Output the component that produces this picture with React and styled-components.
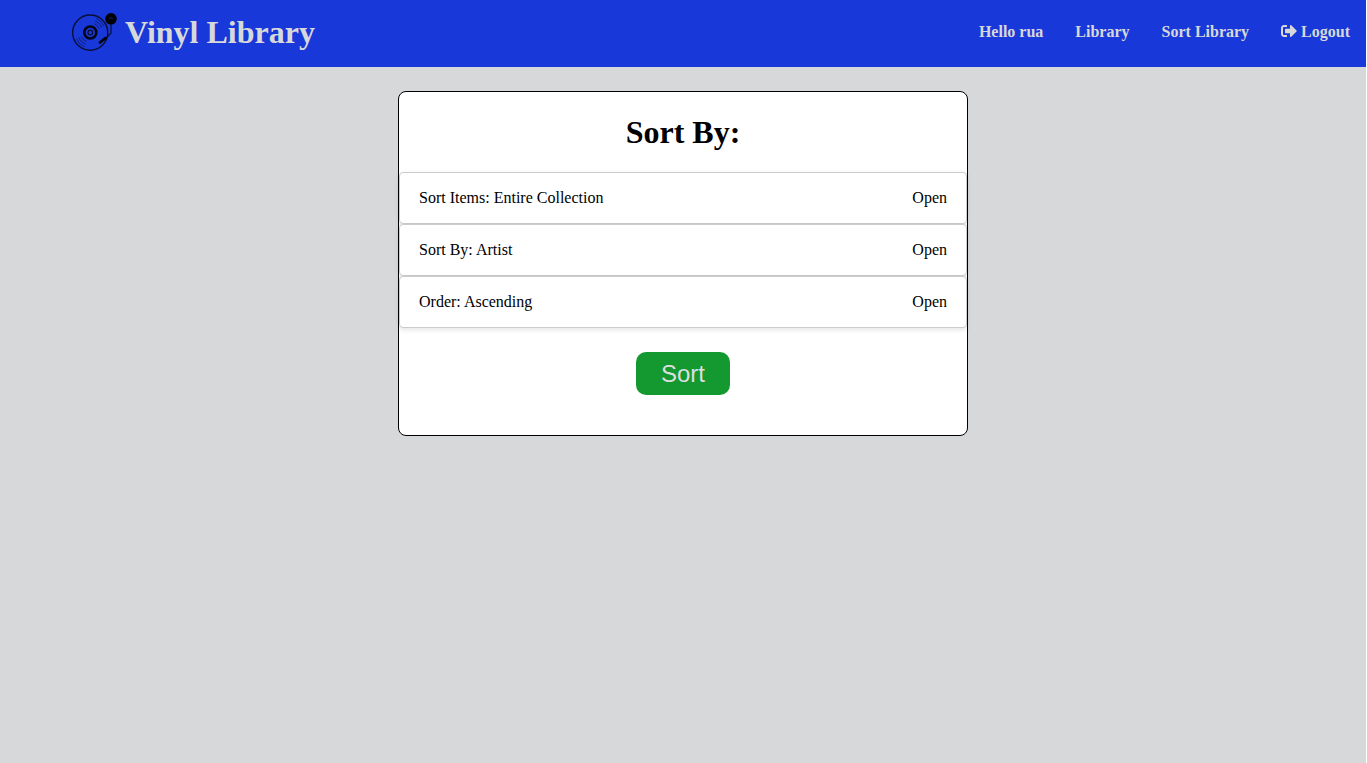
import React from 'react';
import styled, { createGlobalStyle } from 'styled-components';
import { FaSignOutAlt } from 'react-icons/fa';

const GlobalStyle = createGlobalStyle`
  * { box-sizing: border-box; }
  body {
    margin: 0;
    background: #fff;
    color: #000;
    font-family: "Liberation Serif", "Times New Roman", serif;
    font-size: 16px;
  }
`;

const Page = styled.div`
  width: 1366px;
  min-height: 100vh;
  background: #d7d8da;
`;

const Header = styled.header`
  display: flex;
  justify-content: space-between;
  height: 67px;
  padding: 0 16px 0 70px;
  background: #1938d9;
  color: #d7d8da;
`;

const Brand = styled.div`
  display: flex;
  align-items: flex-start;
  gap: 7px;
  padding-top: 8px;
`;

const BrandName = styled.h1`
  margin: 6px 0 0;
  font-size: 32px;
  line-height: 37px;
`;

const Nav = styled.nav`
  display: flex;
  gap: 32px;
  padding-top: 23px;
`;

const NavLink = styled.a`
  font-weight: bold;
  line-height: 18px;
  white-space: nowrap;
  svg { vertical-align: -2px; }
`;

const Card = styled.main`
  width: 570px;
  height: 345px;
  margin: 0 auto;
  border: 1px solid #000;
  border-radius: 8px;
  background: #fff;
  display: flex;
  flex-direction: column;
  align-items: center;
`;

const Content = styled.div`
  padding-top: 24px;
`;

const Title = styled.h1`
  margin: 22px 0 21px;
  font-size: 32px;
  line-height: 37px;
`;

const Options = styled.div`
  align-self: stretch;
`;

const Option = styled.div`
  display: flex;
  justify-content: space-between;
  align-items: center;
  height: 52px;
  padding: 0 19px;
  border: 1px solid #ccc;
  border-radius: 4px;
  background: #fff;
  box-shadow: 0 2px 5px rgba(0, 0, 0, 0.1);
`;

const SortButton = styled.button`
  width: 94px;
  height: 43px;
  margin-top: 24px;
  padding: 0;
  border: 0;
  border-radius: 10px;
  background: #149830;
  color: #dddfdf;
  font: 24px "Liberation Sans", Arial, sans-serif;
`;

const Turntable = () => (
  <svg width="48" height="48" viewBox="0 0 48 48" fill="none" stroke="#000">
    <circle cx="20.2" cy="24.6" r="17.6" strokeWidth="1.4" opacity="0.75" />
    <circle cx="20.3" cy="24.5" r="6" strokeWidth="2.6" opacity="0.9" />
    <circle cx="20.3" cy="24.5" r="2.3" strokeWidth="1.2" opacity="0.8" />
    <g strokeWidth="0.8" opacity="0.55">
      <path d="M24 15.5a10 10 0 0 1 5.3 5M25 12.8a13 13 0 0 1 7 7M26 10.3a15.3 15.3 0 0 1 8 8" />
      <path d="M16.5 33.5a10 10 0 0 1-5.3-5M15.5 36.2a13 13 0 0 1-7-7M14.5 38.8a15.3 15.3 0 0 1-8-8" />
    </g>
    <path d="M41 14.5v10.7L36 30" strokeWidth="1.2" opacity="0.75" />
    <path d="M35.4 30.2l-5.4 4.3" strokeWidth="2.8" strokeLinecap="round" opacity="0.95" />
    <circle cx="41" cy="10.8" r="5.8" fill="#000" stroke="none" />
    <path d="M39.5 11.3a1.5 1.5 0 0 1 3 0" stroke="#1938d9" strokeWidth="0.6" />
  </svg>
);

const options = ['Sort Items: Entire Collection', 'Sort By: Artist', 'Order: Ascending'];

export default function App() {
  return (
    <Page>
      <GlobalStyle />
      <Header>
        <Brand>
          <Turntable />
          <BrandName>Vinyl Library</BrandName>
        </Brand>
        <Nav>
          <NavLink>Hello rua</NavLink>
          <NavLink>Library</NavLink>
          <NavLink>Sort Library</NavLink>
          <NavLink><FaSignOutAlt /> Logout</NavLink>
        </Nav>
      </Header>
      <Content>
        <Card>
          <Title>Sort By:</Title>
          <Options>
            {options.map((label) => (
              <Option key={label}>
                <span>{label}</span>
                <span>Open</span>
              </Option>
            ))}
          </Options>
          <SortButton>Sort</SortButton>
        </Card>
      </Content>
    </Page>
  );
}
